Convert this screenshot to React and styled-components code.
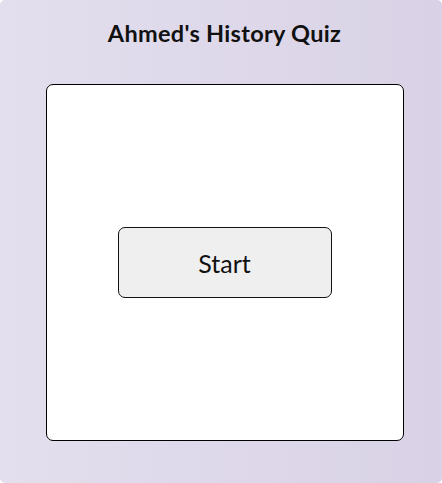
import styled, { createGlobalStyle } from 'styled-components';

const GlobalStyle = createGlobalStyle`
  html, body {
    margin: 0;
    padding: 0;
    background: #ffffff;
  }
  * {
    box-sizing: border-box;
  }
`;

const Page = styled.div`
  width: 442px;
  height: 483px;
  padding-left: 7px;
  border-radius: 5px;
  background: linear-gradient(90deg, #e3dfee 0%, #d9d2e6 100%);
  display: flex;
  flex-direction: column;
  align-items: center;
  font-family: Lato, "Noto Sans", sans-serif;
  color: #111;
`;

const Title = styled.h1`
  margin: 18px 0 0 0;
  height: 30px;
  line-height: 30px;
  font-size: 23.5px;
  font-weight: 700;
  letter-spacing: 0.3px;
`;

const Card = styled.div`
  margin-top: 36px;
  width: 358px;
  height: 357px;
  background: #ffffff;
  border: 1.6px solid #000;
  border-radius: 7px;
  display: flex;
  align-items: center;
  justify-content: center;
`;

const StartButton = styled.button`
  width: 214px;
  height: 71px;
  background: #efefef;
  border: 1.6px solid #111;
  border-radius: 7px;
  font-family: inherit;
  font-size: 25px;
  color: #111;
  cursor: pointer;
`;

export default function App() {
  return (
    <>
      <GlobalStyle />
      <Page>
        <Title>Ahmed's History Quiz</Title>
        <Card>
          <StartButton>Start</StartButton>
        </Card>
      </Page>
    </>
  );
}
